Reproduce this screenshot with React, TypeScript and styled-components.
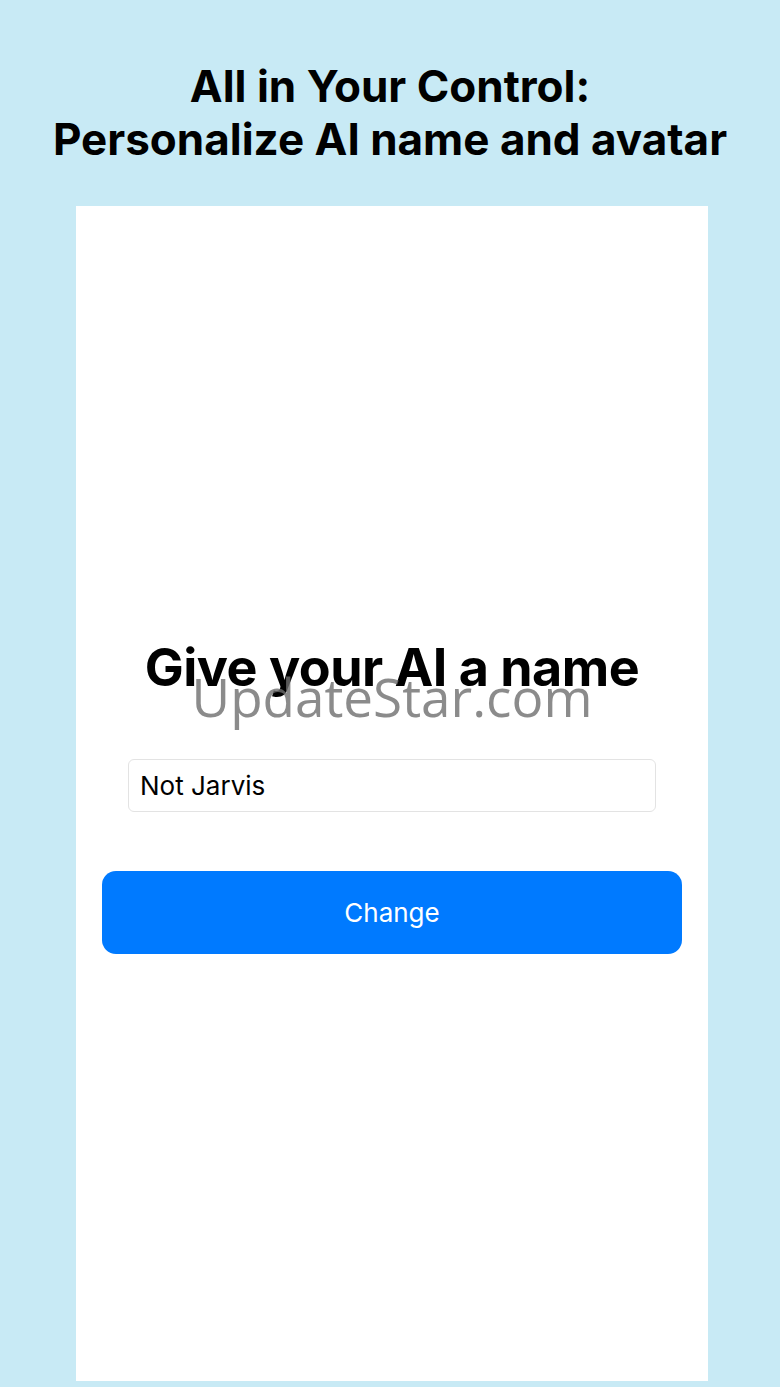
import React from "react";
import styled, { createGlobalStyle } from "styled-components";

const GlobalStyle = createGlobalStyle`
    html, body {
        margin: 0;
        padding: 0;
        background: #c8eaf5;
    }
    body {
        font-family: Inter, "Liberation Sans", sans-serif;
    }
`

const Page = styled.div`
    width: 780px;
    height: 1387px;
    display: flex;
    flex-direction: column;
    align-items: center;
    overflow: hidden;
`

const Headline = styled.h1`
    margin: 0;
    padding-top: 60px;
    height: 206px;
    box-sizing: border-box;
    font-size: 44px;
    line-height: 53px;
    font-weight: 700;
    color: #000;
    text-align: center;
`

const Panel = styled.div`
    width: 632px;
    height: 1175px;
    margin-left: 4px;
    background: #ffffff;
    display: flex;
    flex-direction: column;
    align-items: center;
    justify-content: center;
`

const TitleWrap = styled.div`
    position: relative;
    width: 100%;
    padding-top: 5px;
    display: flex;
    justify-content: center;
`

const Title = styled.h2`
    margin: 0;
    font-size: 52px;
    line-height: 58px;
    font-weight: 700;
    color: #000;
    letter-spacing: -0.5px;
`

const Watermark = styled.div`
    position: absolute;
    left: 0;
    right: 0;
    top: 33px;
    text-align: center;
    font-family: "Open Sans", "DejaVu Sans", sans-serif;
    font-size: 53px;
    line-height: 60px;
    color: rgba(110, 110, 110, 0.8);
    pointer-events: none;
`

const NameInput = styled.input`
    margin-top: 62px;
    width: 528px;
    height: 53px;
    box-sizing: border-box;
    border: 1px solid #e3e3e3;
    border-radius: 6px;
    padding: 0 11px;
    font-family: Inter, "Liberation Sans", sans-serif;
    font-size: 26px;
    color: #000;
    outline: none;
`

const ChangeButton = styled.button`
    margin-top: 59px;
    width: 580px;
    height: 83px;
    border: none;
    border-radius: 14px;
    background: #007aff;
    color: #fff;
    font-family: Inter, "Liberation Sans", sans-serif;
    font-size: 26px;
    font-weight: 400;
`

const App: React.FC = () => {
    return (
        <>
            <GlobalStyle />
            <Page>
                <Headline>
                    All in Your Control:
                    <br />
                    Personalize AI name and avatar
                </Headline>
                <Panel>
                    <TitleWrap>
                        <Title>Give your AI a name</Title>
                        <Watermark>UpdateStar.com</Watermark>
                    </TitleWrap>
                    <NameInput defaultValue="Not Jarvis" />
                    <ChangeButton>Change</ChangeButton>
                </Panel>
            </Page>
        </>
    );
}

export default App;
